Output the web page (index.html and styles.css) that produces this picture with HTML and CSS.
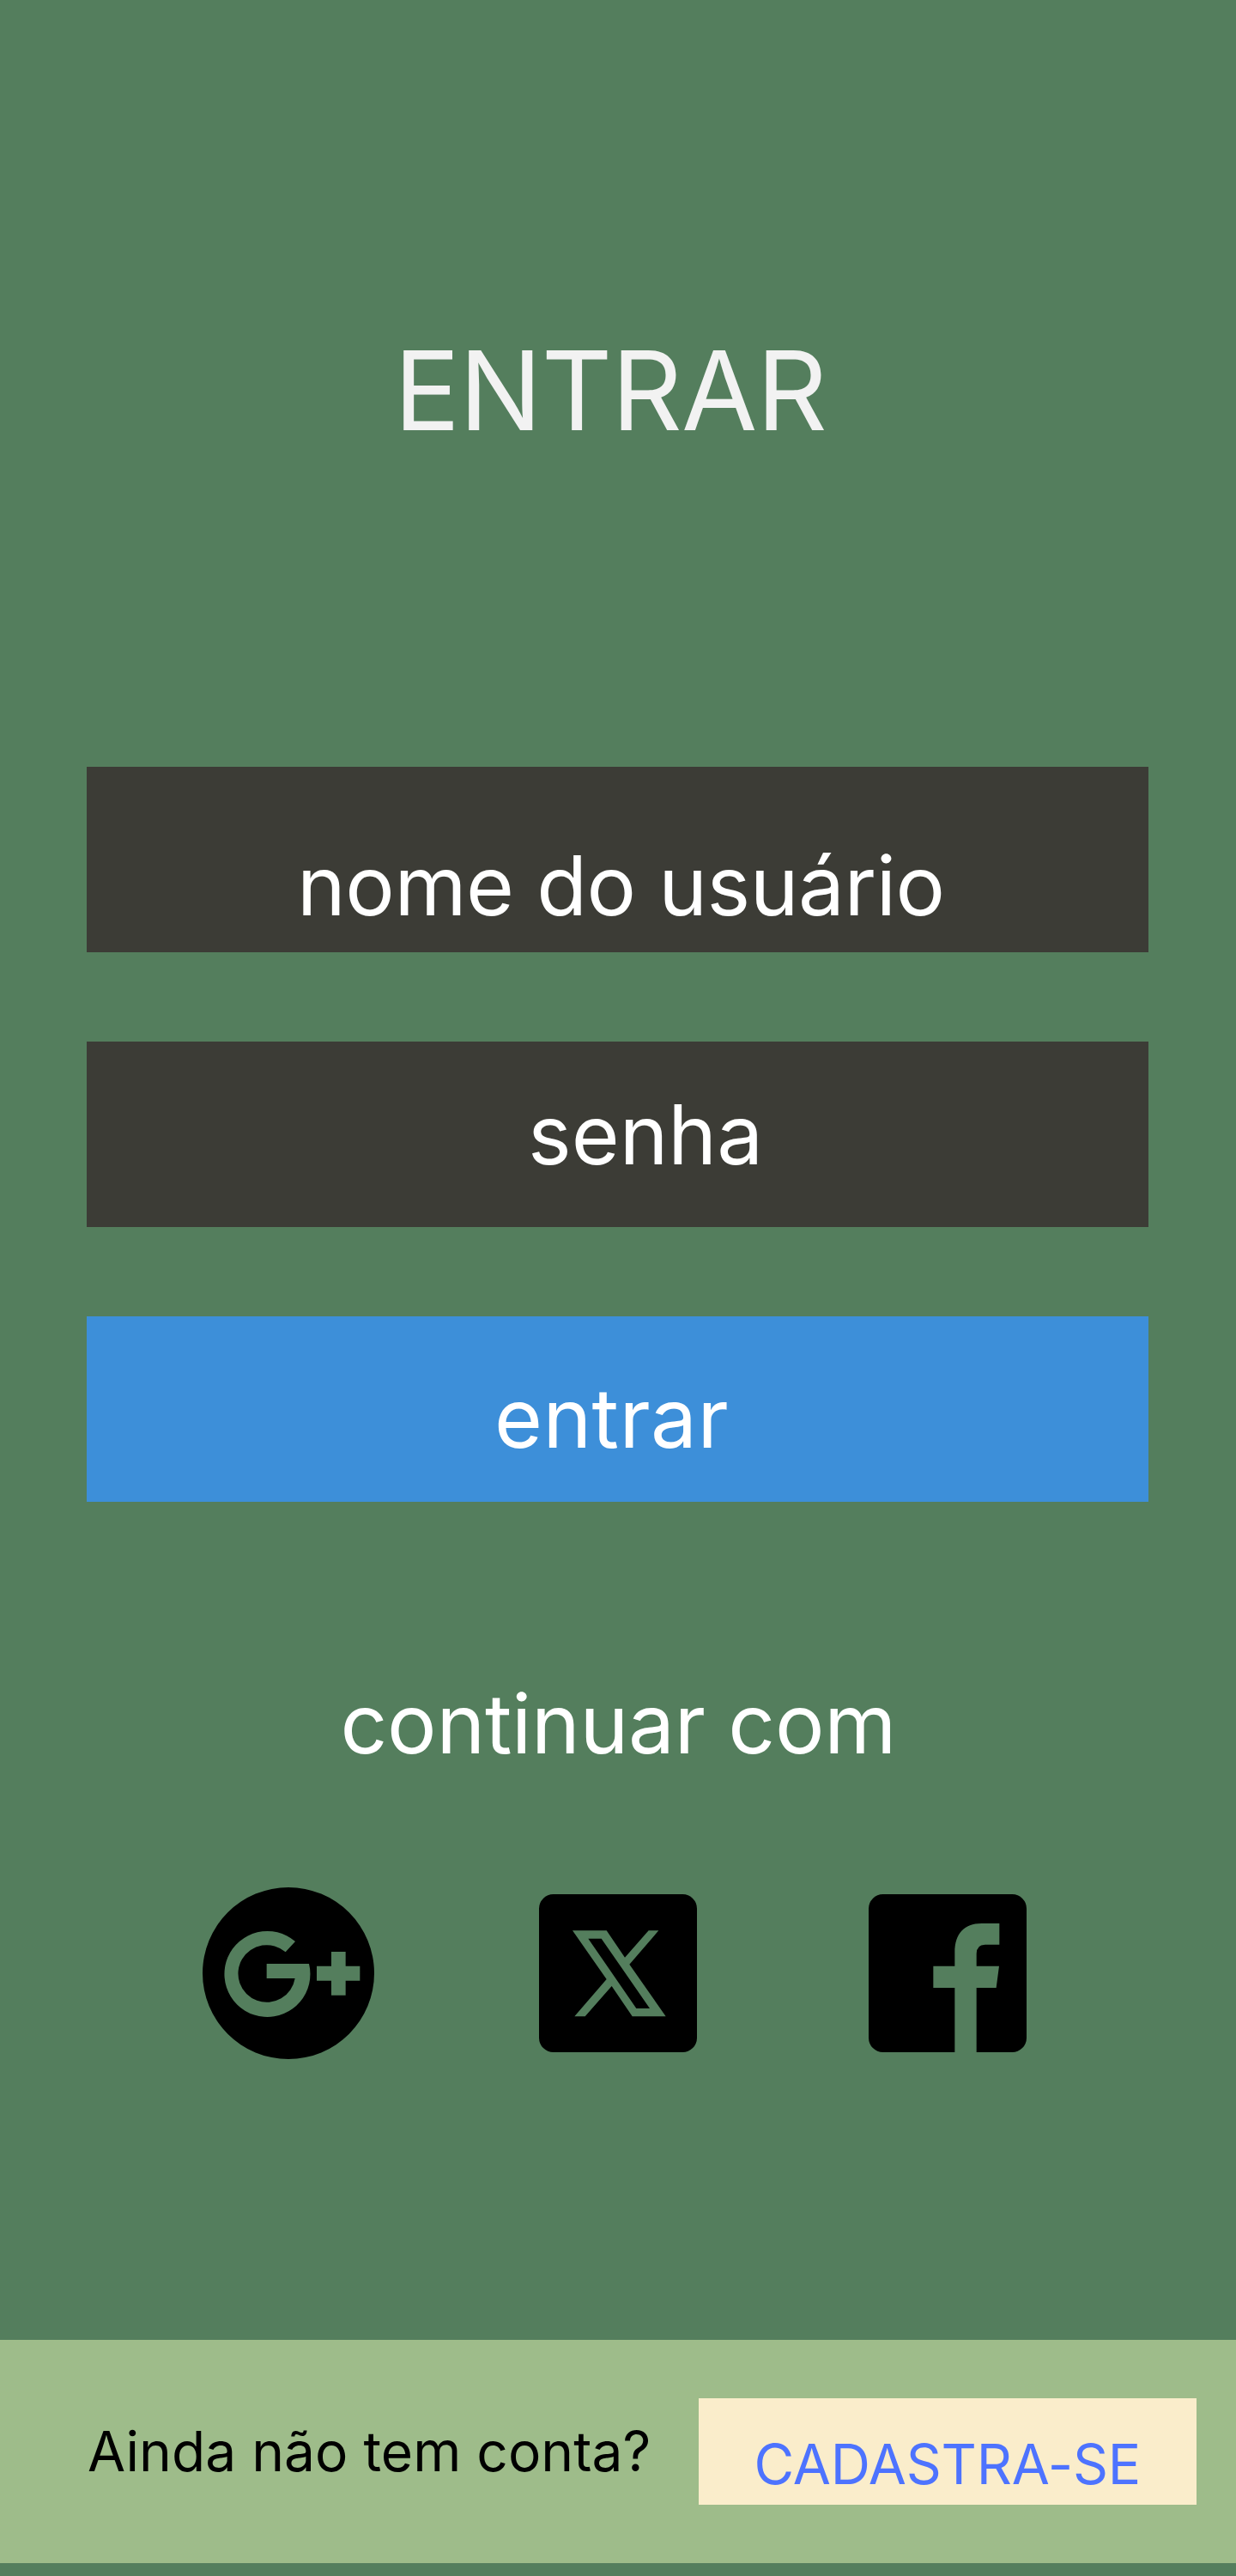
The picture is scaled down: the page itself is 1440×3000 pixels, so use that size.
FILE: index.html
```html
<!DOCTYPE html>
<html lang="pt-BR">
<head>
<meta charset="utf-8">
<title>Entrar</title>
<link rel="stylesheet" href="styles.css">
</head>
<body>
<main class="login">
  <h1 class="title">ENTRAR</h1>
  <div class="form">
    <div class="field field-user">nome do usuário</div>
    <div class="field field-password">senha</div>
    <div class="field field-submit">entrar</div>
  </div>
  <p class="continue">continuar com</p>
  <div class="socials">
    <svg class="icon-google" viewBox="48 53 600 600" aria-label="Google Plus">
      <path fill-rule="evenodd" d="M348 53a300 300 0 1 1 0 600a300 300 0 1 1 0-600Z M372 242A150 150 0 1 0 420 320H272V371H371A100 100 0 1 1 338 279Z M498 278V328H447V379H498V430H548V379H598V328H548V278Z"/>
    </svg>
    <svg class="icon-square" viewBox="54 47 552 552" aria-label="X">
      <path fill-rule="evenodd" d="M104 47H556A50 50 0 0 1 606 97V549A50 50 0 0 1 556 599H104A50 50 0 0 1 54 549V97A50 50 0 0 1 104 47Z M171 174L290 344L178 474H215L308 368L380 474H497L370 292L472 174H437L354 268L290 174Z M226 202H272L441 446H394Z"/>
    </svg>
    <svg class="icon-square icon-facebook" viewBox="51 47 552 552" aria-label="Facebook">
      <path d="M101 47H553A50 50 0 0 1 603 97V549A50 50 0 0 1 553 599H428V374H497L507 298H428V255Q428 223 458 223H508V149H445C385 149 352 185 352 250V298H277V374H352V599H101A50 50 0 0 1 51 549V97A50 50 0 0 1 101 47Z"/>
    </svg>
  </div>
</main>
<footer class="footer">
  <span class="question">Ainda não tem conta?</span>
  <a class="register">CADASTRA-SE</a>
</footer>
</body>
</html>
```
FILE: styles.css
```css
* {
  box-sizing: border-box;
}

body {
  margin: 0;
  height: 3000px;
  background: #547e5d;
  font-family: Inter, sans-serif;
  font-weight: 400;
  color: #fff;
  white-space: nowrap;
}

.login {
  height: 2725px;
  padding-top: 377px;
}

.title {
  margin: 0;
  padding-left: 459px;
  height: 516px;
  font-size: 128px;
  font-weight: 400;
  line-height: 155px;
  letter-spacing: -0.85px;
  color: #f2f2f2;
}

.form {
  display: flex;
  flex-direction: column;
  gap: 104px;
  width: 1237px;
  margin-left: 101px;
}

.field {
  height: 216px;
  background: #3c3c36;
  font-size: 96px;
  line-height: 116px;
}

.field-user {
  padding: 80px 0 0 245px;
  letter-spacing: -0.44px;
}

.field-password {
  padding: 50px 0 0 514px;
}

.field-submit {
  padding: 60px 0 0 475px;
  background: #3d8fd9;
  letter-spacing: 0.45px;
}

.continue {
  margin: 200px 0 0;
  padding-left: 396.5px;
  font-size: 96px;
  line-height: 116px;
  letter-spacing: -0.25px;
}

.socials {
  display: flex;
  align-items: center;
  margin: 132.7px 0 0 236px;
}

.icon-google {
  width: 200px;
  height: 200px;
}

.icon-square {
  width: 184px;
  height: 184px;
  margin-left: 192px;
}

.icon-facebook {
  margin-left: 200px;
}

.footer {
  display: flex;
  align-items: flex-start;
  height: 260px;
  background: #9ebc8a;
  font-size: 64px;
  line-height: 77px;
}

.question {
  width: 814px;
  padding: 91px 0 0 102px;
  letter-spacing: 0.04px;
  color: #000;
}

.register {
  width: 580px;
  height: 124px;
  margin-top: 68px;
  padding: 38px 0 0 64.4px;
  background: #faedcb;
  color: #4d73ff;
  letter-spacing: -0.14px;
}
```
